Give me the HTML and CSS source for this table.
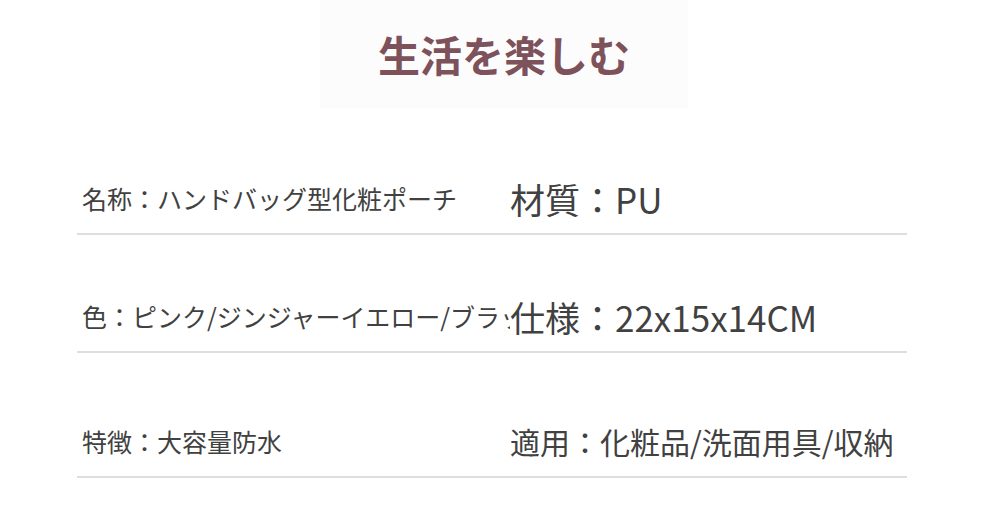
FILE: index.html
```html
<!DOCTYPE html>
<html lang="ja">
<head>
<meta charset="utf-8">
<title>生活を楽しむ</title>
<link rel="stylesheet" href="styles.css">
</head>
<body>
<div class="page">
  <header class="header">
    <h1 class="title">生活を楽しむ</h1>
  </header>
  <section class="specs">
    <div class="row row-1">
      <div class="cell-left">名称：ハンドバッグ型化粧ポーチ</div>
      <div class="cell-right">材質：PU</div>
    </div>
    <div class="row row-2">
      <div class="cell-left">色：ピンク/ジンジャーイエロー/ブラック</div>
      <div class="cell-right">仕様：22x15x14CM</div>
    </div>
    <div class="row row-3">
      <div class="cell-left">特徴：大容量防水</div>
      <div class="cell-right cell-small">適用：化粧品/洗面用具/収納</div>
    </div>
  </section>
</div>
</body>
</html>
```

FILE: styles.css
```css
html, body {
  margin: 0;
  padding: 0;
  background: #ffffff;
}

.page {
  width: 983px;
  height: 530px;
  overflow: hidden;
  font-family: "Noto Sans CJK JP", "Noto Sans", sans-serif;
  color: #414141;
}

.header {
  margin-left: 320px;
  width: 368px;
  height: 108px;
  background: #fdfcfd;
  display: flex;
  align-items: center;
  justify-content: center;
}

.title {
  margin: 0;
  font-size: 42px;
  font-weight: 700;
  line-height: 1.2;
  color: #7e525b;
}

.specs {
  margin-top: 55px;
  margin-left: 77px;
  width: 830px;
  display: flex;
  flex-direction: column;
}

.row {
  display: flex;
  align-items: center;
  height: 70px;
  padding-left: 5px;
  border-bottom: 2px solid #dedede;
}

.row-2 {
  margin-top: 46px;
}

.row-3 {
  margin-top: 53px;
}

.cell-left {
  width: 428px;
  flex: none;
  overflow: hidden;
  white-space: nowrap;
  font-size: 25px;
  line-height: 1.6;
}

.cell-right {
  font-size: 35px;
  line-height: 1.4;
  white-space: nowrap;
}

.cell-small {
  font-size: 30px;
}
```
